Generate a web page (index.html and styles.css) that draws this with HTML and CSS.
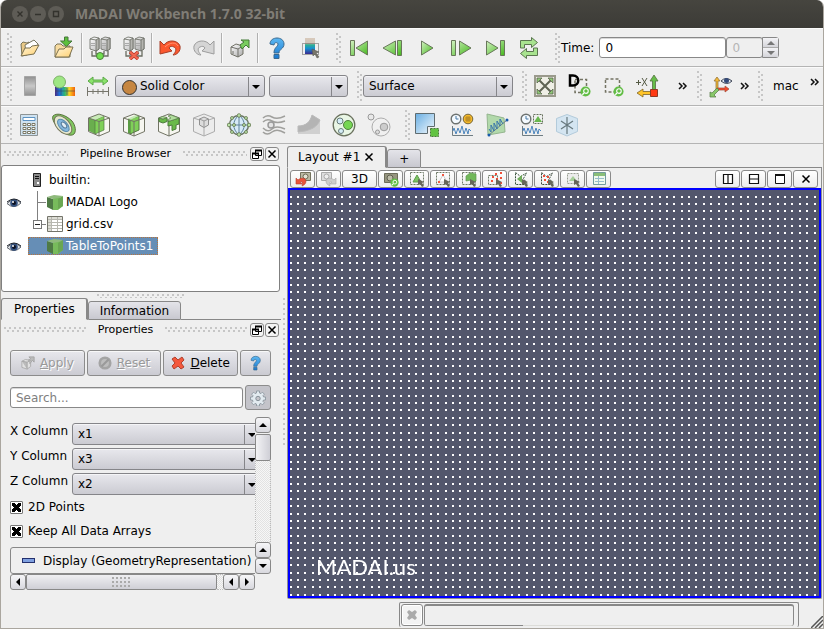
FILE: index.html
```html
<!DOCTYPE html>
<html lang="en">
<head>
<meta charset="utf-8">
<title>MADAI Workbench 1.7.0 32-bit</title>
<link rel="stylesheet" href="styles.css">
</head>
<body>
<svg class="defs" aria-hidden="true">
  <defs>
    <linearGradient id="gGreen" x1="0" y1="0" x2="1" y2="1"><stop offset="0" stop-color="#d4f2c4"/><stop offset="1" stop-color="#45b81c"/></linearGradient>
    <linearGradient id="gBlue" x1="0" y1="0" x2="0" y2="1"><stop offset="0" stop-color="#5db8f2"/><stop offset="1" stop-color="#1878d0"/></linearGradient>
    <linearGradient id="gSky" x1="0" y1="0" x2="1" y2="1"><stop offset="0" stop-color="#69aee2"/><stop offset="1" stop-color="#f3f9fd"/></linearGradient>
    <linearGradient id="gFold" x1="0" y1="0" x2="1" y2="1"><stop offset="0" stop-color="#fff6dc"/><stop offset="1" stop-color="#ffd070"/></linearGradient>
    <linearGradient id="gGrey" x1="0" y1="0" x2="1" y2="1"><stop offset="0" stop-color="#fff"/><stop offset="1" stop-color="#aaa"/></linearGradient>
    <linearGradient id="gRain"><stop offset="0" stop-color="#4a2a80"/><stop offset=".25" stop-color="#1a78e0"/><stop offset=".5" stop-color="#30b870"/><stop offset=".72" stop-color="#ffd020"/><stop offset="1" stop-color="#f06010"/></linearGradient>
    <linearGradient id="gMap" x1="0" y1="0" x2="0" y2="1"><stop offset="0" stop-color="#d8cabc"/><stop offset=".35" stop-color="#d0c4b8"/><stop offset=".42" stop-color="#30b090"/><stop offset=".65" stop-color="#1890d0"/><stop offset="1" stop-color="#3a2a90"/></linearGradient>
    <linearGradient id="gBar" x1="0" y1="0" x2="0" y2="1"><stop offset="0" stop-color="#909090"/><stop offset=".5" stop-color="#c8c8c8"/><stop offset="1" stop-color="#909090"/></linearGradient>

    <symbol id="folder" viewBox="0 0 24 24"><path d="M3 8l2-2 4 1 2-1 1 12-8 2z" fill="#e9c987" stroke="#7a7458"/><path d="M7 9l9-5 4 4-3 8-9 3z" fill="#fff" stroke="#77755f"/><path d="M3 20l4-8 5 0 2-2 7-1-5 9z" fill="url(#gFold)" stroke="#7a7050"/></symbol>
    <symbol id="folder-save" viewBox="0 0 24 24"><path d="M3 10l2-2h4l2 2h7v11H3z" fill="#f7dba0" stroke="#7a7458"/><path d="M3 21l4-8h5l2-2 7 0-4 10z" fill="url(#gFold)" stroke="#7a7050"/><path d="M12.500 1h3.500v4h4l-5.700 5.500L8.500 5h4z" fill="#5cc03c" stroke="#47753a"/></symbol>
    <symbol id="server2" viewBox="0 0 24 24"><g stroke="#66685f" stroke-width=".8"><path d="M2 3l4-2 5 1v11l-3 2-6-2zM13 3l4-2 5 1v11l-3 2-6-2z" fill="url(#gGrey)"/><path d="M8 4l3-2v11l-3 2zM19 4l3-2v11l-3 2z" fill="#b5b5b0"/><path d="M2 3l6 1M13 3l6 1" fill="none"/></g><path d="M3 7.500h4M3 9.500h4M14 7.500h4M14 9.500h4" stroke="#aaa"/><path d="M4 15v5h5M20 15v5h-5M8 15v3h8v-3" fill="none" stroke="#6a6d61" stroke-width="1.300"/></symbol>
    <symbol id="connect" viewBox="0 0 24 24"><use href="#server2"/><circle cx="12" cy="20" r="3.500" fill="#72df50" stroke="#4b7e3b"/></symbol>
    <symbol id="disconnect" viewBox="0 0 24 24"><use href="#server2"/><path d="M8 16l8 7M16 16l-8 7" stroke="#b8352a" stroke-width="3.500"/><path d="M8 16l8 7M16 16l-8 7" stroke="#f26a52" stroke-width="2"/></symbol>
    <symbol id="undo" viewBox="0 0 24 24"><path d="M2 5l4 4c4-6 14-5 16 1 1 5-3 9-7 9 3-3 4-7 1-8-2-1-4-1-5 1l3 3-12 3z" fill="#fb572e" stroke="#a73e28"/><path d="M7 11c5-5 11-5 13-1" fill="none" stroke="#ff9273"/></symbol>
    <symbol id="redo" viewBox="0 0 24 24"><path d="M22 5l-4 4C14 3 4 4 2 10c-1 5 3 9 7 9-3-3-4-7-1-8 2-1 4-1 5 1l-3 3 12 3z" fill="#d5d5d5" stroke="#9d9d9d"/></symbol>
    <symbol id="export" viewBox="0 0 24 24"><path d="M3 11l5-3 7 2v8l-5 3-7-3z" fill="url(#gGrey)" stroke="#707065"/><path d="M3 11l7 2v8M10 13l5-3M5 15v3" fill="none" stroke="#70706a"/><path d="M12 9l4-3-3-2h8v8l-3-3-4 4z" fill="#78cc5f" stroke="#447b38"/></symbol>
    <symbol id="help" viewBox="0 0 24 24"><path d="M6 8c0-8 14-8 14 0 0 5-5 5-5 9h-5c0-6 4-6 4-9 0-2-4-2-4 1zM10 18.500h5v4h-5z" fill="url(#gBlue)" stroke="#3a698f"/></symbol>
    <symbol id="mapsel" viewBox="0 0 24 24"><path d="M7 2h10v16H7z" fill="url(#gMap)"/><path d="M4.500 7.500h16v11h-16z" fill="none" stroke="#555" stroke-dasharray="1 1"/><path d="M14 13l7 3-3 1 3 4-2 1-2-4-2 2z" fill="#77756b" stroke="#55544c" stroke-width=".5"/></symbol>
    <symbol id="first" viewBox="0 0 24 24"><path d="M3.500 4.500h4v15h-4zM20.500 5v14L9 12z" fill="url(#gGreen)" stroke="#68775a"/></symbol>
    <symbol id="prev" viewBox="0 0 24 24"><path d="M16.500 4.500h4v15h-4zM14.500 5v14L2 12z" fill="url(#gGreen)" stroke="#68775a"/></symbol>
    <symbol id="play" viewBox="0 0 24 24"><path d="M6.500 5v14L18 12z" fill="url(#gGreen)" stroke="#68775a"/></symbol>
    <symbol id="next" viewBox="0 0 24 24"><path d="M2.500 4.500h4v15h-4zM10.500 5v14L22 12z" fill="url(#gGreen)" stroke="#68775a"/></symbol>
    <symbol id="last" viewBox="0 0 24 24"><path d="M17.500 4.500h4v15h-4zM3.500 5v14L15 12z" fill="url(#gGreen)" stroke="#68775a"/></symbol>
    <symbol id="loop" viewBox="0 0 24 24"><path d="M3.500 12V4.500h11v-3l6 5-6 5v-3h-7V12zM20.500 12v7.500h-11v3l-6-5 6-5v3h7V12z" fill="#a8e38f" stroke="#5b7650"/></symbol>

    <symbol id="greybar" viewBox="0 0 24 24"><path d="M6.500 2.500h11v19h-11z" fill="url(#gBar)" stroke="#a5a5a5"/></symbol>
    <symbol id="coloredit" viewBox="0 0 24 24"><path d="M3 13h20v9H3z" fill="url(#gRain)"/><path d="M3 17h20M9 14v7M15 14v7" stroke="#3c4a50" stroke-width=".6"/><circle cx="7.500" cy="8" r="6" fill="#9ee684" stroke="#7cb167"/></symbol>
    <symbol id="rescale" viewBox="0 0 24 24"><path d="M2 7l5-4v3h10V3l5 4-5 4V8H7v3z" fill="#8be36c" stroke="#5aa846"/><path d="M1.500 13v9M22.500 13v9M1 17.500h22M7 15v5M12 15v5M17 15v5" stroke="#77766c"/></symbol>
    <symbol id="fit" viewBox="0 0 24 24"><path d="M2 2h20v20H2z" fill="#efefe6" stroke="#9a9a8c" stroke-width="2"/><path d="M6 6l12 12M18 6L6 18" stroke="#5f6454" stroke-width="2"/><path d="M4 4h5L4 9zM20 4h-5l5 5zM4 20h5l-5-5zM20 20h-5l5-5z" fill="#8fc877" stroke="#59634b" stroke-width=".8"/></symbol>
    <symbol id="mag" viewBox="0 0 12 12"><circle cx="6" cy="6" r="5.500" fill="#62bd45"/><circle cx="6.500" cy="5.500" r="2.500" fill="none" stroke="#fff" stroke-width="1.200"/><path d="M4.500 7.500L2.500 9.500" stroke="#fff" stroke-width="1.500"/></symbol>
    <symbol id="zoomdata" viewBox="0 0 24 24"><path d="M8 5.500h11.500v13H8z" fill="none" stroke="#747363" stroke-width="1.500" stroke-dasharray="3 2"/><path d="M3 1.500h3c7 0 7 10 0 10H3z" fill="none" stroke="#000" stroke-width="2.500"/><use href="#mag" x="13" y="12" width="11" height="11"/></symbol>
    <symbol id="zoombox" viewBox="0 0 24 24"><path d="M4.500 5h14v13h-14z" fill="none" stroke="#747363" stroke-width="1.500" stroke-dasharray="3 2"/><use href="#mag" x="12" y="12" width="11" height="11"/></symbol>
    <symbol id="plusx" viewBox="0 0 24 24"><path d="M17.500 16V7H15l4-6 4 6h-2.500v9z" fill="#67bd49" stroke="#54713f" stroke-width=".8"/><path d="M16 17.500H8V15l-6 4 6 4v-2.500h8z" fill="#ffc428" stroke="#7d6526" stroke-width=".8"/><path d="M15.500 15.500h7v7h-7z" fill="#ff3812" stroke="#8e3a25"/><path d="M1 8.500h5M3.500 6v5M7 4l5 8M12 4l-5 8" stroke="#555a45"/></symbol>
    <symbol id="axes" viewBox="0 0 24 24"><path d="M8 16V7H6l3-4 3 4h-2v9z" fill="#f2b83a" stroke="#8b6a2e" stroke-width=".7"/><path d="M9 14h8v-2l4 3-4 3v-2H9z" fill="#f5492a" stroke="#a14a36" stroke-width=".7"/><path d="M9 14l-5 5-2-1v5h6l-2-2 5-5z" fill="#88c86a" stroke="#557a44" stroke-width=".7"/><path d="M13 7q5-5 11 0-5 5-11 0z" fill="#dfe5ee" stroke="#3c4454"/><circle cx="18.500" cy="6.500" r="2.500" fill="#344a78"/></symbol>

    <symbol id="calc" viewBox="0 0 24 24"><path d="M3.500 1.500h17v21h-17z" fill="#cfe2f0" stroke="#8d9394"/><path d="M6 4.500h12v3H6z" fill="#fff" stroke="#5c92c2"/><path d="M6 10.500h3v2H6zM10.500 10.500h3v2h-3zM15 10.500h3v2h-3zM6 14.500h3v2H6zM10.500 14.500h3v2h-3zM15 14.500h3v2h-3zM6 18.500h3v2H6zM10.500 18.500h3v2h-3zM15 18.500h3v2h-3z" fill="#fff" stroke="#716d57" stroke-width=".9"/></symbol>
    <symbol id="contour" viewBox="0 0 24 24"><path d="M1 3C5-1 14 2 20 8c4 5 4 11 2 13-3 3-11 0-16-6C1 9 0 5 1 3z" fill="#80c860" stroke="#5b713f"/><ellipse cx="11" cy="12" rx="11" ry="6.500" transform="rotate(48 11 12)" fill="#e6e8cf" stroke="#75765b"/><ellipse cx="11.500" cy="12" rx="7.500" ry="4" transform="rotate(48 11 12)" fill="#86b8dd" stroke="#5c8db0"/><ellipse cx="12" cy="12" rx="3.500" ry="2" transform="rotate(48 12 12)" fill="#e2edf4" stroke="#547a9a"/></symbol>
    <symbol id="wire" viewBox="0 0 24 24"><path d="M1.500 5L12 1l10.500 4v13.500L12 23l-10.500-4.500zM1.500 5L12 8.500 22.500 5M12 8.500V23" fill="none" stroke="#717364"/></symbol>
    <symbol id="clip" viewBox="0 0 24 24"><path d="M1.500 5L12 1l10.500 4v13.500L12 23l-10.500-4.500z" fill="#f6f6f0"/><path d="M2 5l6 2v14l-6-3z" fill="#6aae4e"/><path d="M8 7l9-4v14l-9 4z" fill="#7fd058" stroke="#527a40" stroke-width=".7"/><path d="M2 5l9-4 6 2-9 4z" fill="#c9ebb8"/><use href="#wire"/></symbol>
    <symbol id="slice" viewBox="0 0 24 24"><path d="M1.500 5L12 1l10.500 4v13.500L12 23l-10.500-4.500z" fill="#f6f6f0"/><path d="M8 6l9-3v14l-9 4z" fill="#7fd058" stroke="#527a40"/><path d="M6 5.500l9-4 2 1.500-9 4z" fill="#c4eab4"/><path d="M6 5.500L8 7v14l-2-1z" fill="#5a9c43"/><use href="#wire"/></symbol>
    <symbol id="threshold" viewBox="0 0 24 24"><path d="M1.500 5L12 1l10.500 4v13.500L12 23l-10.500-4.500z" fill="#f6f6f0"/><use href="#wire"/><path d="M2 5l4 1 4-1.500v4L6 10 2 8.500zM11 8.500L22 5v6l-3 1v4l-4 1.500V12l-4 1z" fill="#6aba49" stroke="#4d7c3c"/><path d="M2 5l3.500-1.500L10 4.500 6 6zM11 3l3-1 8 3-9 3-3-1 4-2z" fill="#b0de9c" stroke="#5b7c4e" stroke-width=".7"/></symbol>
    <symbol id="subset" viewBox="0 0 24 24"><path d="M1.500 5L12 1l10.500 4v13.500L12 23l-10.500-4.500z" fill="#ececec" stroke="#aaa"/><path d="M1.500 5L12 8.500 22.500 5M12 8.500V23" fill="none" stroke="#aaa"/><path d="M7.500 6l4.500-2 4.500 2v6L12 14.500 7.500 12z" fill="#ddd" stroke="#909090"/><path d="M7.500 6l4.500 2 4.500-2M12 8v6" fill="none" stroke="#999"/></symbol>
    <symbol id="glyphs" viewBox="0 0 24 24"><circle cx="12" cy="12" r="9.500" fill="#d7eaf7" stroke="#6e7867" stroke-width="1.500"/><path d="M2 12h20M12 2v20M12 2c-7 6-7 14 0 20 7-6 7-14 0-20" fill="none" stroke="#5f8299"/><g fill="#b9e0a5" stroke="#62764e" stroke-width=".8"><circle cx="12" cy="2.500" r="1.800"/><circle cx="12" cy="21.500" r="1.800"/><circle cx="2" cy="12" r="1.800"/><circle cx="22" cy="12" r="1.800"/><circle cx="7" cy="12" r="1.500"/><circle cx="17" cy="12" r="1.500"/><circle cx="5" cy="5" r="1.500"/><circle cx="19" cy="5" r="1.500"/><circle cx="5" cy="19" r="1.500"/><circle cx="19" cy="19" r="1.500"/></g></symbol>
    <symbol id="stream" viewBox="0 0 24 24"><path d="M1 5q4-4 9-1t13-1M1 9q4-4 9-1t13 0M1 19q4 4 9 0t13 1M1 15q5 5 9 1t13 0" fill="none" stroke="#a0a09d" stroke-width="1.500"/><circle cx="9" cy="12" r="3" fill="#e4e4e4" stroke="#999" stroke-width="1.500"/></symbol>
    <symbol id="warp" viewBox="0 0 24 24"><path d="M1 13c8 0 12-4 14-11l8 5v14H1z" fill="#d0d0d0"/><path d="M1 13c8 0 12-4 14-11l8 5c-3 7-8 9-15 11l-7 1z" fill="#b4b4b4" stroke="#bbb"/></symbol>
    <symbol id="group" viewBox="0 0 24 24"><circle cx="12" cy="12" r="10.800" fill="#e9f6e5" stroke="#69705d" stroke-width="1.300"/><circle cx="8" cy="8" r="3" fill="#d5edf7" stroke="#687a79"/><circle cx="16" cy="12" r="4.500" fill="#75d653" stroke="#50803e"/><circle cx="9" cy="18" r="2.500" fill="#d5edf7" stroke="#687a79"/></symbol>
    <symbol id="extract" viewBox="0 0 24 24"><circle cx="14" cy="14" r="9" fill="#f0f0f0" stroke="#adadad"/><circle cx="4" cy="4" r="3" fill="#e8e8e8" stroke="#999"/><circle cx="17" cy="14" r="3.800" fill="#ccc" stroke="#999"/><circle cx="10.500" cy="19" r="2" fill="#ddd" stroke="#999"/></symbol>
    <symbol id="selview" viewBox="0 0 24 24"><path d="M.5.500h19v13h-7v7H.5z" fill="url(#gSky)" stroke="#5f6c70"/><path d="M15.500 15.500h8v8h-8z" fill="#62c342" stroke="#48793a" stroke-dasharray="2 1"/></symbol>
    <symbol id="wave" viewBox="0 0 24 12"><path d="M2.500 1v9.500H23" fill="none" stroke="#6f7d83"/><path d="M3 6l1-3 2 6 2-6 2 5 2-7 2 8 2-6 2 6 1-5 2 2" fill="none" stroke="#4d86bd"/></symbol>
    <symbol id="clock" viewBox="0 0 12 12"><circle cx="6" cy="6" r="4.800" fill="#f4faff" stroke="#6d7270" stroke-width="1.400"/><path d="M6 3v3h2.500" fill="none" stroke="#4777a3"/></symbol>
    <symbol id="plottime" viewBox="0 0 24 24"><use href="#clock" x="0" y="0" width="12" height="12"/><circle cx="18" cy="6" r="4.800" fill="#f5b92a" stroke="#74653b"/><path d="M16 4h4v4h-4zM16 6h4M18 4v4" fill="none" stroke="#9a7424" stroke-width=".7"/><use href="#wave" x="0" y="12" width="24" height="12"/></symbol>
    <symbol id="plotline" viewBox="0 0 24 24"><path d="M2 1l17 4 1 14-17 3z" fill="#b2d9ab" stroke="#94b58e"/><path d="M4 22L22 7" stroke="#6a7f86"/><path d="M4 16l2 3V12l3 6V10l3 6V8l3 5V6l3 5" fill="none" stroke="#3975a9"/><circle cx="4" cy="22" r="1.500" fill="#175bab"/><circle cx="22" cy="7" r="1.500" fill="#175bab"/></symbol>
    <symbol id="plotsel" viewBox="0 0 24 24"><use href="#clock" x="0" y="0" width="12" height="12"/><path d="M13.500 1.500h9v9h-9z" fill="none" stroke="#66715d" stroke-dasharray="2 1"/><path d="M18 3l4 6h-8z" fill="#69b84f"/><use href="#wave" x="0" y="12" width="24" height="12"/></symbol>
    <symbol id="probe" viewBox="0 0 24 24"><path d="M1.500 5.500L12 1.500l10.500 4v13L12 23l-10.500-4.500z" fill="#d4e5f1" stroke="#b3cbdb"/><path d="M12 4v17M6 8l12 8M18 8L6 16" stroke="#67787d" stroke-width="1.200"/></symbol>

    <symbol id="cube" viewBox="0 0 16 16"><path d="M0 3l6 2v11l-6-3z" fill="#4f7a45"/><path d="M0 3l7-2 9 1-5 3H6z" fill="#8fba7c"/><path d="M6 5l10-2v9l-5 4H6z" fill="#78bb5c"/><path d="M11 5l5-3v10l-5 3z" fill="#6aa752"/></symbol>
    <symbol id="eye" viewBox="0 0 16 12"><path d="M1 6.500Q8-1 15 6Q8 13 1 6.500z" fill="#dfe3e6" stroke="#60656e"/><circle cx="8" cy="6" r="3.800" fill="#34517f"/><circle cx="8" cy="6" r="2" fill="#0b1020"/><circle cx="7" cy="5" r="1" fill="#fff"/><path d="M1 5Q8-1 15 5" fill="none" stroke="#1d222b"/></symbol>
    <symbol id="host" viewBox="0 0 8 14"><path d="M.5.500h7v13h-7z" fill="#8b8b8b" stroke="#222"/><path d="M2 3.500h4M2 5.500h4" stroke="#111"/><path d="M4 9h2v2H4z" fill="#fff"/></symbol>
    <symbol id="sheet" viewBox="0 0 16 16"><path d="M.5.500h15v15H.5z" fill="#fff" stroke="#74746a"/><path d="M1 1h14v2H1zM1 3h3v12H1z" fill="#ddddd5"/><path d="M1 3.500h14M1 6.500h14M1 9.500h14M1 12.500h14M4.500 1v14M10.500 1v14" stroke="#b7b7b0"/></symbol>
    <symbol id="float" viewBox="0 0 12 12"><path d="M4.500 2.500h6v5h-6zM1.500 5.500h6v5h-6z" fill="#fff" stroke="#000"/><path d="M4 2.500h7M1 5.500h7" stroke="#000" stroke-width="2"/></symbol>
    <symbol id="x" viewBox="0 0 12 12"><path d="M2.500 2.500l7 7M9.500 2.500l-7 7" stroke="#000" stroke-width="1.500"/></symbol>
    <symbol id="delx" viewBox="0 0 14 14"><path d="M1 3l3-2 3 3 4-3 2 3-3 3 3 4-3 2-3-3-4 3-2-3 3-3z" fill="#f4583c" stroke="#b0402d"/></symbol>
    <symbol id="greyx" viewBox="0 0 14 14"><path d="M2 4l2-2 3 2 3-2 2 2-2 3 2 3-2 2-3-2-3 2-2-2 2-3z" fill="#aaa"/></symbol>
    <symbol id="applyi" viewBox="0 0 16 16"><path d="M1 6l4-2 6 1v7l-4 3-6-2z" fill="#e1e1e1" stroke="#aaa"/><path d="M1 6l6 1v8M7 7l4-2M8 5l3-2-2-2h6v6l-2-2-3 4" fill="#bbb" stroke="#a2a2a2"/></symbol>
    <symbol id="reseti" viewBox="0 0 16 16"><circle cx="8" cy="8" r="7.500" fill="#a4a4a4"/><circle cx="8" cy="8" r="4.500" fill="#bdbdbd"/><path d="M4 12l8-8" stroke="#9a9a9a" stroke-width="2.500"/></symbol>
    <symbol id="gear" viewBox="0 0 16 16"><path d="M6.500 1h3v2l1.500.600 1.400-1.400 2 2L13 5.600l.6 1.400H15.500v3h-2l-.6 1.300 1.500 1.500-2 2L11 13.400l-1.500.600v2h-3v-2L5 13.400l-1.400 1.400-2-2L3 11.300 2.400 10H.5V7h2L3 5.600 1.600 4.200l2-2L5 3.600 6.500 3z" fill="#e3ebf0" stroke="#87929a" stroke-width=".8"/><circle cx="8" cy="8.500" r="2.200" fill="#c4c4ca" stroke="#87929a"/></symbol>

    <symbol id="camundo" viewBox="0 0 16 16"><path d="M5.500 1.500h10v8h-10z" fill="#bbb9a3" stroke="#74735d"/><circle cx="10.500" cy="5.500" r="2.500" fill="#e4e3d4" stroke="#69684f"/><path d="M1 13V7l2 2c3-3 8-2 8 1s-2 4-4 5c1-3 0-5-2-4l2 2z" fill="#e9533a" stroke="#b63e2e" stroke-width=".6"/></symbol>
    <symbol id="camredo" viewBox="0 0 16 16"><path d="M.5 1.500h10v8H.5z" fill="#ddd" stroke="#aaa"/><circle cx="5.500" cy="5.500" r="2.500" fill="#eee" stroke="#aaa"/><path d="M15 13V7l-2 2c-3-3-8-2-8 1s2 4 4 5c-1-3 0-5 2-4l-2 2z" fill="#ccc" stroke="#a5a5a5" stroke-width=".6"/></symbol>
    <symbol id="camadj" viewBox="0 0 16 16"><path d="M1.500 2.500h13v9h-13z" fill="#96957f" stroke="#6c6b5a"/><circle cx="7" cy="7" r="3" fill="#bdbca8" stroke="#5f5e4f"/><use href="#mag" x="7" y="7" width="9" height="9"/></symbol>
    <symbol id="cursor" viewBox="0 0 16 16"><path d="M9 8l6 3-2 1 2 3-2 1-2-3-2 1z" fill="#66665a"/></symbol>
    <symbol id="dash" viewBox="0 0 16 16"><path d="M1.500 1.500h13v12h-13z" fill="none" stroke="#6f7a68" stroke-dasharray="2 1"/></symbol>
    <symbol id="selcell" viewBox="0 0 16 16"><use href="#dash"/><path d="M8 4l4 7H4z" fill="#7cc462" stroke="#5d9c4b"/><use href="#cursor"/></symbol>
    <symbol id="selpoint" viewBox="0 0 16 16"><use href="#dash"/><path d="M8 4l4 7H4z" fill="#fff" stroke="#ccc"/><path d="M7 3h2v2H7zM3 10h2v2H3zM11 10h2v2h-2z" fill="#f05a42"/><use href="#cursor"/></symbol>
    <symbol id="frcell" viewBox="0 0 16 16"><use href="#dash"/><path d="M5 5l4-3 6 1v7l-3 1-2-2-5 1z" fill="#72b95a" stroke="#609751" stroke-width=".7"/><use href="#cursor"/></symbol>
    <symbol id="frpoint" viewBox="0 0 16 16"><path d="M1.500 4.500h9v9h-9z" fill="none" stroke="#6f7a68" stroke-dasharray="2 1"/><path d="M5 6h2M8 3h2M13 2h2M4 10h2M9 8h2M13 7h2M13 12h2" stroke="#f04e38" stroke-width="2"/><use href="#cursor"/></symbol>
    <symbol id="polycell" viewBox="0 0 16 16"><path d="M2.500 1.500l5 4 6-3.500-3 5.500 4 6h-12z" fill="none" stroke="#37513a" stroke-dasharray="2 1"/><path d="M9 4v8L4 8z" fill="#6fac5a"/><use href="#cursor"/></symbol>
    <symbol id="polypoint" viewBox="0 0 16 16"><path d="M2.500 1.500l5 4 6-3.500-3 5.500 4 6h-12z" fill="none" stroke="#3c4a3c" stroke-dasharray="2 1"/><path d="M4 5h2M8 6h2M5 9h2M8 11h2" stroke="#f04e38" stroke-width="2"/><use href="#cursor"/></symbol>
    <symbol id="block" viewBox="0 0 16 16"><path d="M2.500 2.500h11v10h-11z" fill="#ececec" stroke="#9aa094" stroke-dasharray="2 1"/><path d="M4 10l4-5 4 5z" fill="#a6cf99"/><use href="#cursor"/></symbol>
    <symbol id="table" viewBox="0 0 16 16"><path d="M2.500 1.500h12v12h-12z" fill="#f0faee" stroke="#739b9d"/><path d="M3 2h11v3H3z" fill="#8abf78"/><path d="M4 7.500h9M4 10.500h9M7.500 5v8" stroke="#9abecb"/></symbol>
    <symbol id="splith" viewBox="0 0 12 12"><path d="M1.500 1.500h9v9h-9zM6 1v10" fill="#fff" stroke="#111" stroke-width="1.200"/></symbol>
    <symbol id="splitv" viewBox="0 0 12 12"><path d="M1.500 1.500h9v9h-9zM1 6h10" fill="#fff" stroke="#111" stroke-width="1.200"/></symbol>
    <symbol id="max" viewBox="0 0 12 12"><path d="M1.500 1.500h9v9h-9z" fill="#fff" stroke="#111"/><path d="M1 2h10" stroke="#111" stroke-width="2"/></symbol>
    <symbol id="more" viewBox="0 0 10 8"><path d="M1 1l3 3-3 3M5 1l3 3-3 3" fill="none" stroke="#111" stroke-width="1.500"/></symbol>
  </defs>
</svg>

<header class="titlebar">
  <button class="winbtn" aria-label="Close"><svg viewBox="0 0 16 16"><path d="M5.500 5.500l5 5M10.500 5.500l-5 5"/></svg></button>
  <button class="winbtn" aria-label="Minimize"><svg viewBox="0 0 16 16"><path d="M5 8.500h6"/></svg></button>
  <button class="winbtn" aria-label="Maximize"><svg viewBox="0 0 16 16"><path d="M5.500 5.500h5v5h-5z"/></svg></button>
  <h1>MADAI Workbench 1.7.0 32-bit</h1>
</header>

<div class="toolbar">
  <i class="grip"></i>
  <button class="tool" aria-label="Open"><svg><use href="#folder"/></svg></button>
  <button class="tool" aria-label="Save"><svg><use href="#folder-save"/></svg></button>
  <i class="sep"></i>
  <button class="tool" aria-label="Connect"><svg><use href="#connect"/></svg></button>
  <button class="tool" aria-label="Disconnect"><svg><use href="#disconnect"/></svg></button>
  <i class="sep"></i>
  <button class="tool" aria-label="Undo"><svg><use href="#undo"/></svg></button>
  <button class="tool" aria-label="Redo"><svg><use href="#redo"/></svg></button>
  <i class="sep"></i>
  <button class="tool" aria-label="Auto apply"><svg><use href="#export"/></svg></button>
  <i class="sep"></i>
  <button class="tool" aria-label="Help"><svg><use href="#help"/></svg></button>
  <button class="tool" aria-label="Select color map"><svg><use href="#mapsel"/></svg></button>
  <i class="grip next"></i>
  <button class="tool" aria-label="First frame"><svg><use href="#first"/></svg></button>
  <button class="tool" aria-label="Previous frame"><svg><use href="#prev"/></svg></button>
  <button class="tool" aria-label="Play"><svg><use href="#play"/></svg></button>
  <button class="tool" aria-label="Next frame"><svg><use href="#next"/></svg></button>
  <button class="tool" aria-label="Last frame"><svg><use href="#last"/></svg></button>
  <button class="tool" aria-label="Loop"><svg><use href="#loop"/></svg></button>
  <i class="grip next"></i>
  <label class="time" for="time">Time:</label>
  <input class="field timefield" id="time" type="text" value="0">
  <span class="spin">
    <input class="field" type="text" value="0" disabled aria-label="Time step">
    <span class="steps"><button disabled aria-label="Up"><i class="arrow up"></i></button><button disabled aria-label="Down"><i class="arrow down"></i></button></span>
  </span>
</div>

<div class="toolbar display">
  <i class="grip"></i>
  <button class="tool" aria-label="Color legend"><svg><use href="#greybar"/></svg></button>
  <button class="tool" aria-label="Edit color map"><svg><use href="#coloredit"/></svg></button>
  <button class="tool" aria-label="Rescale to data range"><svg><use href="#rescale"/></svg></button>
  <span class="combo wide swatched"><select aria-label="Color by"><option>Solid Color</option></select></span>
  <span class="combo small"><select aria-label="Component"><option></option></select></span>
  <i class="grip next"></i>
  <span class="combo wide"><select aria-label="Representation"><option>Surface</option></select></span>
  <i class="grip next"></i>
  <button class="tool" aria-label="Reset camera"><svg><use href="#fit"/></svg></button>
  <button class="tool" aria-label="Zoom to data"><svg><use href="#zoomdata"/></svg></button>
  <button class="tool" aria-label="Zoom to box"><svg><use href="#zoombox"/></svg></button>
  <button class="tool" aria-label="View +X"><svg><use href="#plusx"/></svg></button>
  <button class="more" aria-label="More camera tools"><svg><use href="#more"/></svg></button>
  <i class="grip"></i>
  <button class="tool" aria-label="Show axes"><svg><use href="#axes"/></svg></button>
  <button class="more tight" aria-label="More axes tools"><svg><use href="#more"/></svg></button>
  <i class="grip"></i>
  <button class="macro">mac</button>
  <button class="more high" aria-label="More macros"><svg><use href="#more"/></svg></button>
</div>

<div class="toolbar roomy">
  <i class="grip"></i>
  <button class="tool" aria-label="Calculator"><svg><use href="#calc"/></svg></button>
  <button class="tool" aria-label="Contour"><svg><use href="#contour"/></svg></button>
  <button class="tool" aria-label="Clip"><svg><use href="#clip"/></svg></button>
  <button class="tool" aria-label="Slice"><svg><use href="#slice"/></svg></button>
  <button class="tool" aria-label="Threshold"><svg><use href="#threshold"/></svg></button>
  <button class="tool" aria-label="Extract subset"><svg><use href="#subset"/></svg></button>
  <button class="tool" aria-label="Glyph"><svg><use href="#glyphs"/></svg></button>
  <button class="tool" aria-label="Stream tracer"><svg><use href="#stream"/></svg></button>
  <button class="tool" aria-label="Warp"><svg><use href="#warp"/></svg></button>
  <button class="tool" aria-label="Group datasets"><svg><use href="#group"/></svg></button>
  <button class="tool" aria-label="Extract level"><svg><use href="#extract"/></svg></button>
  <i class="grip"></i>
  <button class="tool" aria-label="Extract selection"><svg><use href="#selview"/></svg></button>
  <button class="tool" aria-label="Plot over time"><svg><use href="#plottime"/></svg></button>
  <button class="tool" aria-label="Plot over line"><svg><use href="#plotline"/></svg></button>
  <button class="tool" aria-label="Plot selection over time"><svg><use href="#plotsel"/></svg></button>
  <button class="tool" aria-label="Probe"><svg><use href="#probe"/></svg></button>
</div>

<main>
  <aside>
    <div class="docktitle">
      <i class="texture"></i><h2>Pipeline Browser</h2><i class="texture"></i>
      <button aria-label="Float"><svg><use href="#float"/></svg></button><button aria-label="Close"><svg><use href="#x"/></svg></button>
    </div>
    <ul class="tree">
      <li><span class="vis"></span><span class="branch root"></span><svg class="host"><use href="#host"/></svg><span class="name">builtin:</span></li>
      <li><span class="vis"><svg><use href="#eye"/></svg></span><span class="branch child"></span><svg class="kind"><use href="#cube"/></svg><span class="name">MADAI Logo</span></li>
      <li><span class="vis"></span><span class="branch child open"><button aria-label="Collapse"></button></span><svg class="kind"><use href="#sheet"/></svg><span class="name">grid.csv</span></li>
      <li><span class="vis"><svg><use href="#eye"/></svg></span><span class="selected"><svg class="kind"><use href="#cube"/></svg><span class="name">TableToPoints1</span></span></li>
    </ul>
    <i class="texture hsplit"></i>
    <div class="tabs"><button class="tab active">Properties</button><button class="tab">Information</button></div>
    <div class="docktitle second">
      <i class="texture"></i><h2>Properties</h2><i class="texture"></i>
      <button aria-label="Float"><svg><use href="#float"/></svg></button><button aria-label="Close"><svg><use href="#x"/></svg></button>
    </div>
    <div class="actions">
      <button class="btn" disabled><svg><use href="#applyi"/></svg><span><u>A</u>pply</span></button>
      <button class="btn" disabled><svg><use href="#reseti"/></svg><span><u>R</u>eset</span></button>
      <button class="btn"><svg><use href="#delx"/></svg><span><u>D</u>elete</span></button>
      <button class="btn slim" aria-label="Help"><svg><use href="#help"/></svg></button>
    </div>
    <div class="search">
      <input class="field" type="text" placeholder="Search..." aria-label="Search">
      <button class="btn pressed" aria-label="Advanced"><svg><use href="#gear"/></svg></button>
    </div>
    <div class="scroller">
      <div class="viewport">
        <div class="prop"><label for="xc">X Column</label><span class="combo"><select id="xc"><option>x1</option></select></span></div>
        <div class="prop"><label for="yc">Y Column</label><span class="combo"><select id="yc"><option>x3</option></select></span></div>
        <div class="prop"><label for="zc">Z Column</label><span class="combo"><select id="zc"><option>x2</option></select></span></div>
        <label class="check"><input type="checkbox" checked>2D Points</label>
        <label class="check"><input type="checkbox" checked>Keep All Data Arrays</label>
        <button class="section"><i class="minus"></i>Display (GeometryRepresentation)</button>
      </div>
      <div class="vbar">
        <button aria-label="Scroll up"><i class="arrow up"></i></button>
        <i class="thumb"></i><i class="track"></i>
        <button aria-label="Scroll up"><i class="arrow up"></i></button>
        <button aria-label="Scroll down"><i class="arrow down"></i></button>
      </div>
      <div class="hbar">
        <button aria-label="Scroll left"><i class="arrow left"></i></button>
        <i class="thumb"><b></b></i><i class="track"></i>
        <button aria-label="Scroll left"><i class="arrow left"></i></button>
        <button aria-label="Scroll right"><i class="arrow right"></i></button>
      </div>
    </div>
  </aside>
  <div class="splitter"><i></i></div>
  <section class="layout">
    <div class="tabs viewtabs"><button class="tab active">Layout #1 <svg><use href="#x"/></svg></button><button class="tab add">+</button></div>
    <div class="pane">
      <div class="viewbar">
        <button aria-label="Camera undo"><svg><use href="#camundo"/></svg></button>
        <button aria-label="Camera redo"><svg><use href="#camredo"/></svg></button>
        <button class="mode">3D</button>
        <button aria-label="Adjust camera"><svg><use href="#camadj"/></svg></button>
        <button aria-label="Select cells on"><svg><use href="#selcell"/></svg></button>
        <button aria-label="Select points on"><svg><use href="#selpoint"/></svg></button>
        <button aria-label="Select cells through"><svg><use href="#frcell"/></svg></button>
        <button aria-label="Select points through"><svg><use href="#frpoint"/></svg></button>
        <button aria-label="Select cells with polygon"><svg><use href="#polycell"/></svg></button>
        <button aria-label="Select points with polygon"><svg><use href="#polypoint"/></svg></button>
        <button aria-label="Select block"><svg><use href="#block"/></svg></button>
        <button aria-label="Show table"><svg><use href="#table"/></svg></button>
        <span class="fill"></span>
        <button aria-label="Split horizontal"><svg class="sm"><use href="#splith"/></svg></button>
        <button aria-label="Split vertical"><svg class="sm"><use href="#splitv"/></svg></button>
        <button aria-label="Maximize view"><svg class="sm"><use href="#max"/></svg></button>
        <button aria-label="Close view"><svg class="sm"><use href="#x"/></svg></button>
      </div>
      <div class="view"><canvas id="points"></canvas><span class="mark">MADAI.us</span></div>
    </div>
  </section>
</main>

<footer>
  <div class="progress">
    <button disabled aria-label="Abort"><svg><use href="#greyx"/></svg></button>
    <div class="gauge"></div>
  </div>
  <svg class="sizegrip" viewBox="0 0 12 12"><path d="M0 12L12 0M4 12l8-8M8 12l4-4"/></svg>
</footer>
<script src="scene.js"></script>
</body>
</html>
```

FILE: styles.css
```css
* { box-sizing: border-box; }
html { height: 100%; background: #fff; }
body {
  margin: 0;
  min-height: 100%;
  display: flex;
  flex-direction: column;
  font: 12px/16px "DejaVu Sans", sans-serif;
  color: #000;
  background: #efefef;
  border: solid #aaa69f;
  border-width: 0 1px 1px;
  border-radius: 7px 7px 0 0;
}
.defs { position: absolute; width: 0; height: 0; }
button, input, select { font: inherit; color: inherit; margin: 0; padding: 0; border: 0; background: none; }
h1, h2, ul { margin: 0; padding: 0; font-size: inherit; font-weight: normal; list-style: none; }
svg { display: block; flex: none; }
i { font-style: normal; display: block; flex: none; }

.titlebar {
  height: 28px;
  margin: 0 -1px;
  padding-left: 12px;
  display: flex;
  align-items: center;
  gap: 2px;
  background: linear-gradient(#46453f, #3c3b37);
  border-radius: 6px 6px 0 0;
}
.titlebar h1 { margin-left: 9px; font: bold 14px/20px "Open Sans", sans-serif; color: #807d76; }
.winbtn { width: 16px; height: 16px; border-radius: 50%; background: #5e5c56; }
.winbtn svg { width: 16px; height: 16px; fill: none; stroke: #33322d; stroke-width: 1.4; }

.toolbar {
  height: 39px;
  display: flex;
  align-items: center;
  border-bottom: 1px solid #b4b4b4;
  border-top: 1px solid #fafafa;
  white-space: nowrap;
}
.toolbar.display { padding-bottom: 2px; }
.toolbar.roomy { height: 38px; }
.grip {
  width: 12px;
  height: 30px;
  border-left: 6px solid transparent;
  background: radial-gradient(circle at 1px 1px, #c6c6c6 1px, transparent 1px) 0 0 / 6px 5px,
    radial-gradient(circle at 1px 1px, #c6c6c6 1px, transparent 1px) 3px 3px / 6px 5px;
  background-clip: padding-box;
}
.grip.next { margin-left: 3px; }
.sep { width: 2px; height: 30px; border-left: 1px solid #b0b0b0; border-right: 1px solid #fafafa; }
.tool { width: 34px; height: 34px; display: flex; align-items: center; justify-content: center; flex: none; }
.roomy .tool { width: 35px; padding-right: 2px; }
.tool svg { width: 24px; height: 24px; }
.roomy .grip + .tool { width: 34px; }
.roomy .tool ~ .grip { margin-left: 2px; }
.time { margin-right: 5px; }
.field { height: 21px; border: 1px solid #888; border-radius: 3px; background: #fff; padding: 0 5px; box-shadow: inset 0 1px #d8d8d8; }
.timefield { width: 127px; }
.spin { display: flex; width: 53px; }
.spin .field { width: 37px; color: #b5b5b5; background: #efefef; }
.steps { width: 17px; margin-left: -1px; display: flex; flex-direction: column; border: 1px solid #888; border-radius: 0 3px 3px 0; }
.steps button { flex: 1; display: flex; align-items: center; justify-content: center; background: linear-gradient(#f3f3f6, #d5d5da); }
.steps button + button { border-top: 1px solid #aaa; }
.steps .arrow { color: #777; }

.arrow { width: 0; height: 0; border: 4px solid transparent; }
.arrow.up { border-top: 0; border-bottom-color: currentColor; }
.arrow.down { border-bottom: 0; border-top-color: currentColor; }
.arrow.left { border-left: 0; border-right-color: currentColor; }
.arrow.right { border-right: 0; border-left-color: currentColor; }

.combo { position: relative; height: 22px; flex: none; }
.combo select {
  appearance: none;
  width: 100%;
  height: 22px;
  padding: 0 20px 0 5px;
  border: 1px solid #858589;
  border-radius: 3px;
  background: linear-gradient(90deg, transparent calc(100% - 16px), #858589 0, #858589 calc(100% - 15px), transparent 0), linear-gradient(#e8e8ed, #cbcbd2);
  box-shadow: inset 0 1px #f5f5f7;
}
.combo::after {
  content: "";
  position: absolute;
  right: 5px;
  top: 10px;
  border: 4px solid transparent;
  border-top-color: #000;
  border-bottom: 0;
  pointer-events: none;
}
.combo.wide { width: 150px; }
.combo.small { width: 79px; margin-left: 4px; }
.combo.swatched select { padding-left: 24px; }
.combo.swatched::before {
  content: "";
  position: absolute;
  left: 7px;
  top: 5px;
  width: 13px;
  height: 13px;
  border: 1px solid #333;
  border-radius: 50%;
  background: #c68642;
}
.more { width: 31px; height: 20px; display: flex; align-items: center; justify-content: center; padding-left: 6px; }
.more + .grip { margin-left: -4px; }
.more svg { width: 10px; height: 8px; }
.more.tight { width: 15px; padding: 0; }
.more.tight + .grip { margin-left: 0; }
.more.high { margin-left: auto; width: 16px; padding: 0; align-self: flex-start; margin-top: 4px; }
.macro { margin-left: 9px; }

main { flex: 1; display: grid; grid-template-columns: 280px 6px minmax(0, 1fr); padding-right: 1px; }
aside { min-width: 0; }
.docktitle { height: 14px; margin-top: 3px; display: flex; align-items: center; gap: 1px; padding: 0 2px 0 3px; }
.docktitle h2 { margin: 0 11px; font-size: 11px; line-height: 14px; }
.docktitle button { width: 14px; height: 14px; border: 1px solid #888; border-radius: 3px; background: #f4f4f4; display: flex; align-items: center; justify-content: center; }
.docktitle button svg { width: 12px; height: 12px; }
.texture {
  flex: 1;
  height: 6px;
  background: radial-gradient(circle at 1px 1px, #c6c6c6 1px, transparent 1px) 0 0 / 5px 6px,
    radial-gradient(circle at 1px 1px, #c6c6c6 1px, transparent 1px) 3px 3px / 5px 6px;
}
.texture + button { margin-left: 2px; }
.tree { height: 127px; margin-top: 4px; padding: 3px 0 0; background: #fff; border: 1px solid #808080; border-radius: 3px; width: 279px; }
.tree li { height: 22px; display: flex; align-items: center; }
.vis { width: 26px; }
.vis svg { width: 16px; height: 12px; margin: 2px 0 0 4px; }
.branch { width: 18px; height: 22px; position: relative; }
.branch.root { width: 4px; }
.branch.child::before { content: ""; position: absolute; left: 9px; top: 0; height: 100%; border-left: 1px solid #808080; }
.branch.child::after { content: ""; position: absolute; left: 9px; top: 11px; width: 9px; border-top: 1px solid #808080; }
.branch.open::before { height: 11px; }
.branch button { position: absolute; z-index: 1; left: 5px; top: 7px; width: 9px; height: 9px; border: 1px solid #777; background: linear-gradient(#222, #222) center / 5px 1px no-repeat #fff; }
.host { width: 8px; height: 14px; margin: 0 8px 0 1px; }
.kind { width: 16px; height: 16px; }
.kind + .name { margin-left: 3px; }
.tree li > .kind { margin-left: 1px; }
.selected { display: flex; align-items: center; height: 18px; padding: 0 4px 0 18px; color: #fff; background: #668eb6; border: 1px dotted #b57440; }
.hsplit { width: 88px; height: 4px; margin: 2px auto 0; }
.tabs { display: flex; align-items: flex-end; }
.tabs::after { content: ""; flex: 1; border-bottom: 1px solid #888; }
.tab { height: 19px; border: 1px solid #888; border-radius: 3px 3px 0 0; background: linear-gradient(#e4e4e9, #c8c8d0); padding: 0 11px; }
.tab.active { height: 22px; background: #efefef; border-bottom-color: #efefef; border-right-width: 2px; padding: 0 11px 0 12px; }

.actions { display: flex; gap: 2px; margin: 13px 10px 0 9px; }
.btn {
  flex: 75;
  height: 26px;
  display: flex;
  align-items: center;
  justify-content: center;
  gap: 5px;
  border: 1px solid #8c8c8c;
  border-radius: 3px;
  background: linear-gradient(#e8e8ed, #cbcbd2);
  box-shadow: inset 0 1px #f8f8f8;
}
.btn svg { width: 14px; height: 14px; }
.btn.slim { flex: 30; }
.btn.slim svg { width: 16px; height: 16px; }
.btn:disabled { color: #999; text-shadow: 1px 1px #fff; }
.search { display: flex; align-items: center; gap: 2px; margin: 9px 10px 0 9px; }
.search .field { flex: 1; min-width: 0; }
.search .field::placeholder { color: #808080; }
.search .btn { flex: none; width: 26px; height: 25px; }
.search .pressed { background: #c4c4ca; box-shadow: none; }
.search .btn svg { width: 16px; height: 16px; }

.scroller { display: grid; grid-template-columns: minmax(0, 1fr) 16px; margin: 7px 10px 0 9px; }
.viewport { overflow: hidden; padding-top: 6px; white-space: nowrap; }
.prop { display: flex; height: 25px; }
.prop label { flex: none; width: 62px; }
.prop .combo { width: 189px; }
.check { display: flex; align-items: center; height: 18px; gap: 5px; }
.check + .check { margin-top: 6px; }
.check input { appearance: none; width: 13px; height: 13px; border: 1px solid #777; border-radius: 1px; background: #fff; }
.check input:checked {
  background: linear-gradient(45deg, transparent 38%, #000 38%, #000 62%, transparent 62%) center / 9px 9px no-repeat,
    linear-gradient(-45deg, transparent 38%, #000 38%, #000 62%, transparent 62%) center / 9px 9px no-repeat, #fff;
}
.section { display: flex; align-items: center; height: 27px; width: 260px; margin-top: 7px; padding: 0 11px; gap: 8px; border: 1px solid #888; border-radius: 3px; }
.minus { width: 13px; height: 5px; border: 1px solid #23306e; background: #7fa0e0; }
.vbar { display: flex; flex-direction: column; }
.hbar { display: flex; }
.vbar button, .hbar button { width: 16px; height: 16px; display: flex; align-items: center; justify-content: center; flex: none; border: 1px solid #888; border-radius: 3px; background: linear-gradient(#f6f6f8, #d8d8de); }
.thumb { border: 1px solid #888; border-radius: 2px; background: linear-gradient(90deg, #f3f3f5, #cfcfd6); }
.vbar .thumb { height: 27px; margin-top: 1px; }
.hbar .thumb { flex: 191; background: linear-gradient(#efeff2, #cfcfd6); display: flex; align-items: center; justify-content: center; }
.thumb b { width: 19px; height: 11px; background: radial-gradient(circle at 1px 1px, #aaa 1px, transparent 1px) 0 0 / 4px 4px; }
.track { flex: 1; background: repeating-conic-gradient(#e2e2e2 0 25%, #f6f6f6 0 50%) 0 0 / 2px 2px; border: dotted #bbb; border-width: 0 1px; }
.hbar .track { flex: 6; border-width: 1px 0; }

.splitter { display: flex; align-items: center; justify-content: center; }
.splitter i { width: 3px; height: 148px; background: radial-gradient(circle at 1px 1px, #c6c6c6 1px, transparent 1px) 0 0 / 3px 5px; }

.layout { display: flex; flex-direction: column; padding-top: 2px; }
.viewtabs .tab { padding: 0 11px; height: 19px; }
.viewtabs .tab.active { display: flex; align-items: center; gap: 3px; height: 22px; padding: 0 10px; }
.viewtabs .tab.active svg { width: 12px; height: 12px; }
.viewtabs .add { width: 34px; }
.pane { flex: 1; display: flex; flex-direction: column; border: solid #909090; border-width: 0 1px 1px 1px; border-radius: 0 0 2px 2px; }
.viewbar { display: flex; height: 20px; padding: 2px 3px 0 2px; gap: 1px; }
.viewbar button { width: 25px; height: 18px; display: flex; align-items: center; justify-content: center; flex: none; border: 1px solid #8a8a8a; border-radius: 3px; background: linear-gradient(#fff, #ececec); }
.viewbar .mode { width: 35px; }
.viewbar svg { width: 16px; height: 16px; }
.viewbar svg.sm { width: 12px; height: 12px; }
.fill { flex: 1; }
.view { flex: 1; position: relative; min-height: 200px; border: 2px solid #00f; background: #53576c; overflow: hidden; }
.view canvas { position: absolute; inset: 0; }
.mark { position: absolute; left: 26px; bottom: 15px; font: 400 22px/28px Lato, sans-serif; color: #fff; }

footer { display: flex; align-items: flex-end; height: 29px; }
.progress { width: 400px; height: 25px; margin: 0 12px 1px auto; display: flex; gap: 1px; padding: 1px 4px 1px 1px; border: solid #888; border-width: 1px 1px 0 1px; border-radius: 2px; }
.progress button { width: 22px; height: 22px; display: flex; align-items: center; justify-content: center; border: 1px solid #888; border-radius: 3px; background: #f3f3f3; box-shadow: inset 0 0 0 1px #fff; }
.progress button svg { width: 14px; height: 14px; }
.gauge {
  flex: 1;
  border: 1px solid #888;
  border-width: 2px 1px 0;
  border-radius: 3px;
  background: linear-gradient(90deg, #888 98px, #dcdcd8 98px) bottom / 100% 1px no-repeat;
}
.sizegrip { width: 12px; height: 12px; fill: none; stroke: #555; stroke-width: 1.5; }
```

FILE: scene.js
```js
// Draws the point grid, snapping every 2px point to whole pixels.
(function () {
  var canvas = document.getElementById("points");
  var pitch = 7.38;

  function draw() {
    var box = canvas.parentNode;
    canvas.width = box.clientWidth;
    canvas.height = box.clientHeight;
    var ctx = canvas.getContext("2d");
    ctx.fillStyle = "#fff";
    for (var y = 6.1; y < canvas.height; y += pitch - 0.008) {
      for (var x = 0.1; x < canvas.width; x += pitch) {
        ctx.fillRect(Math.floor(x), Math.floor(y), 2, 2);
      }
    }
  }

  window.addEventListener("resize", draw);
  draw();
})();
```
